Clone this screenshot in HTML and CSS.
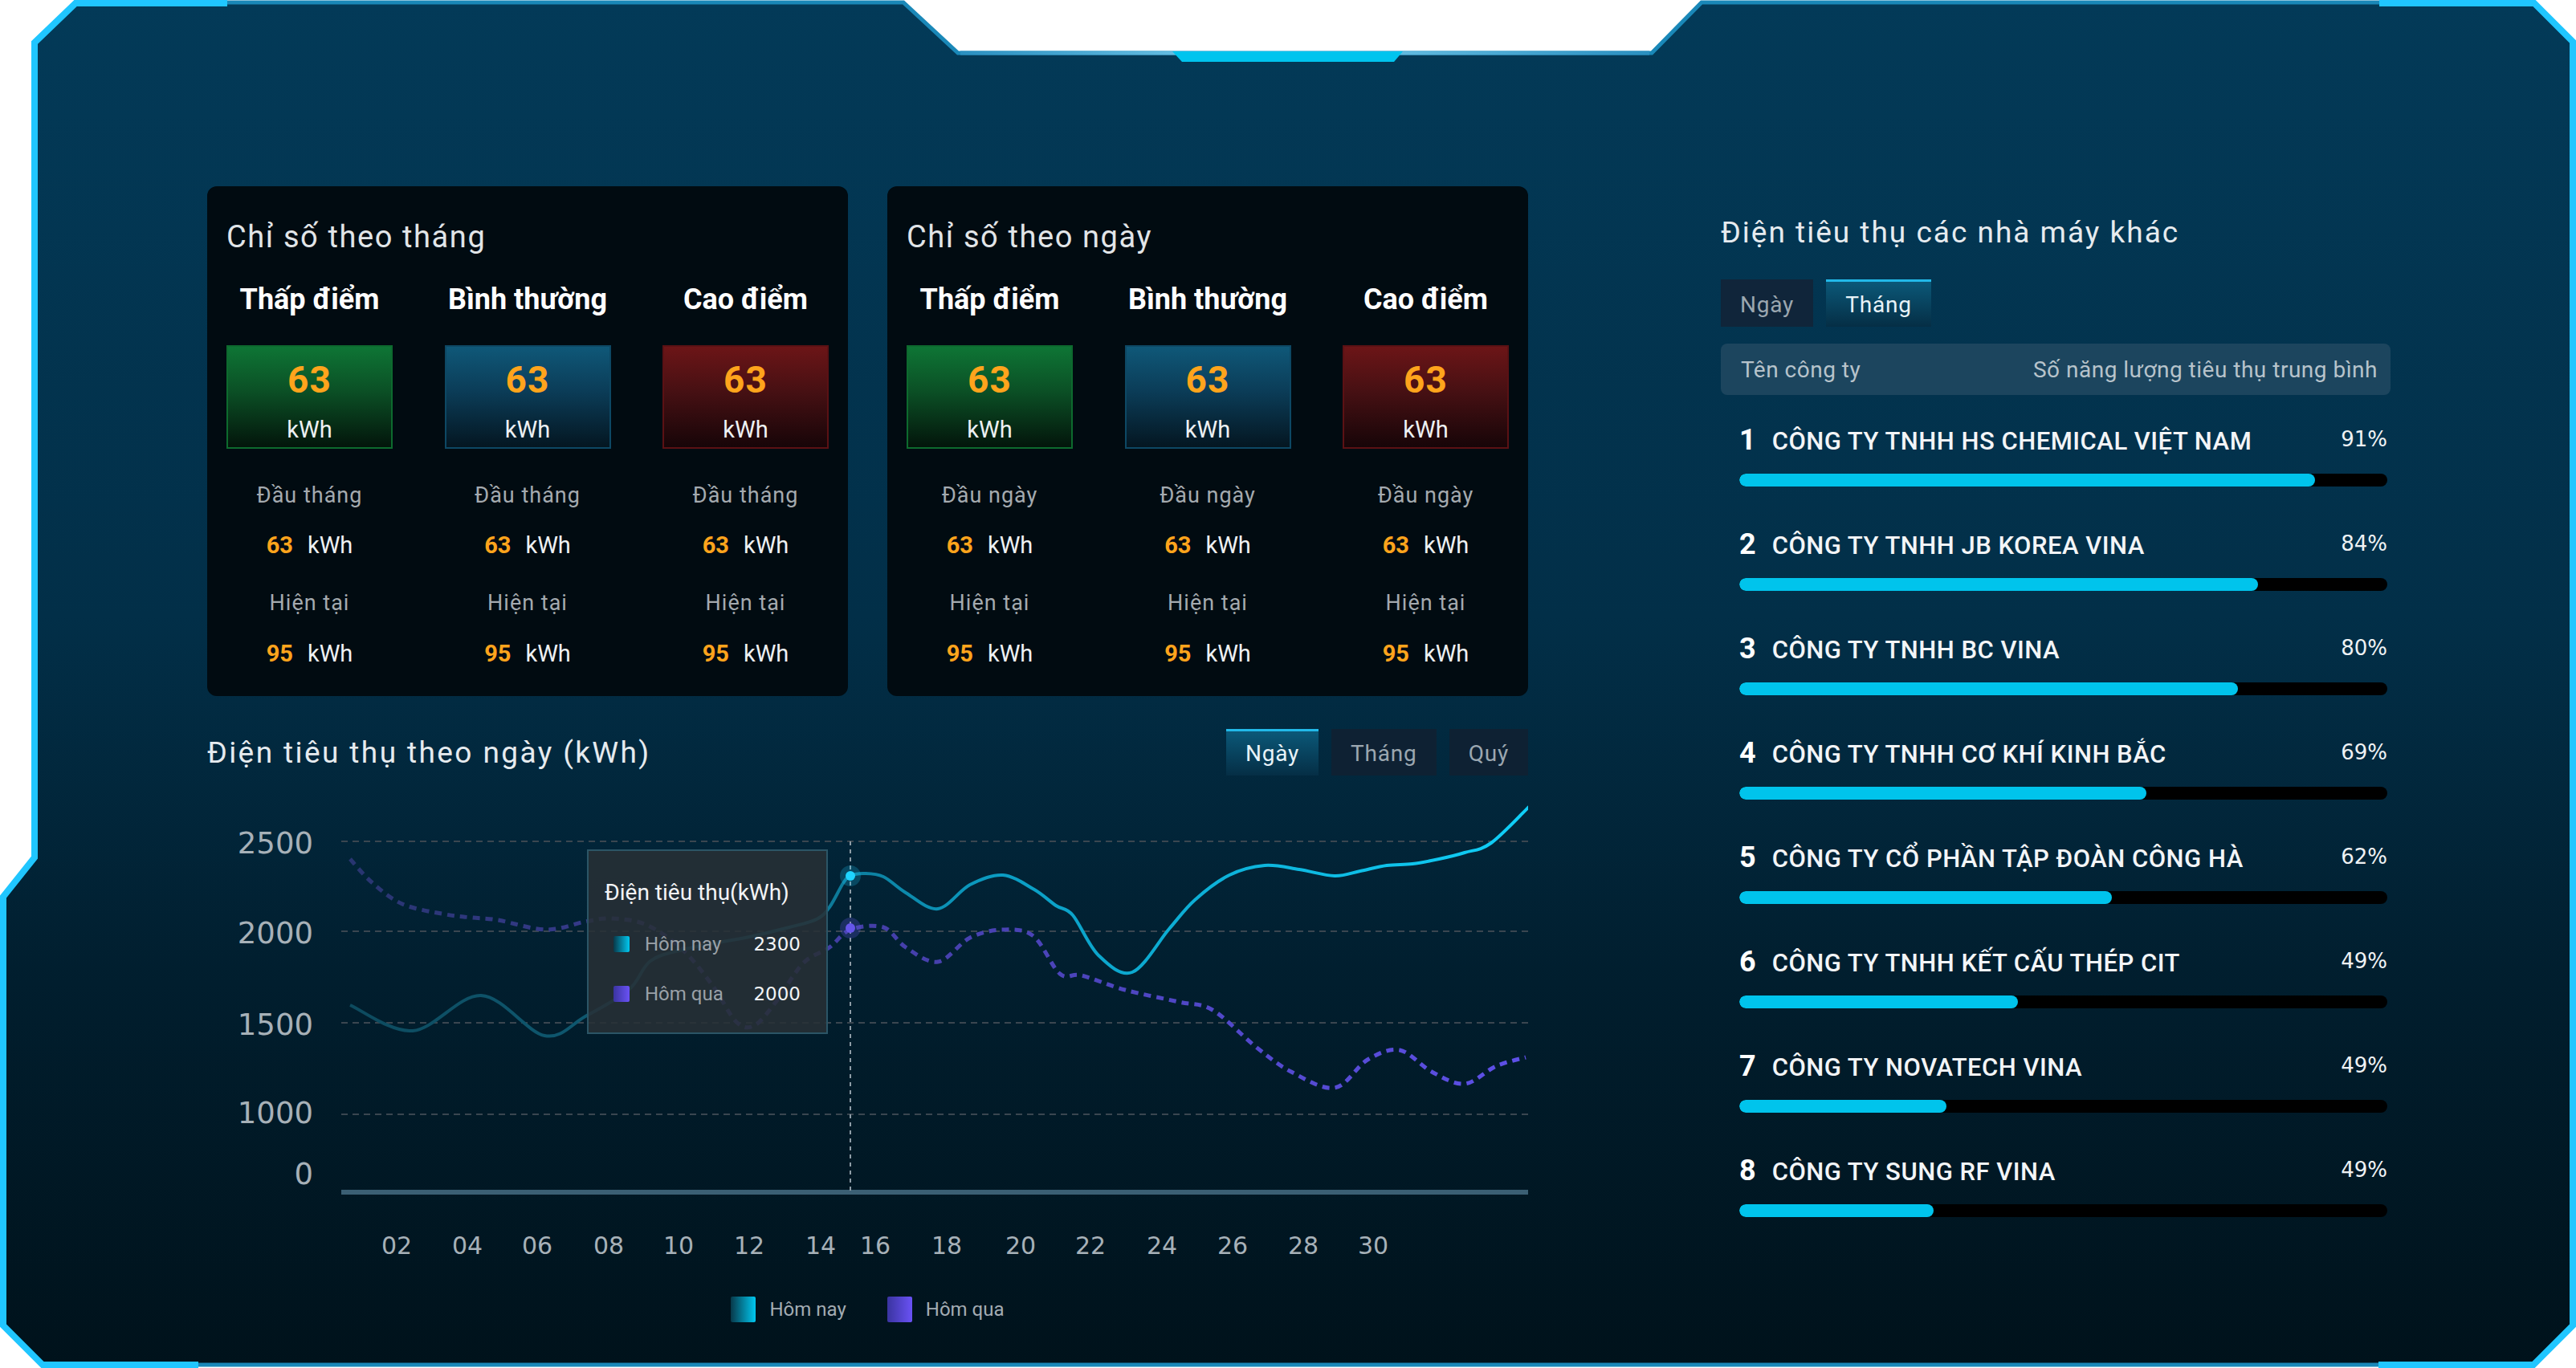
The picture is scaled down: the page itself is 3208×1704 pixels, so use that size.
FILE: index.html
```html
<!DOCTYPE html>
<html lang="vi">
<head>
  <meta charset="UTF-8">
  <meta name="viewport" content="width=device-width, initial-scale=1.0">
  <title>Điện tiêu thụ</title>
  <link rel="stylesheet" href="styles.css">
</head>
<body>
  <div class="screen">
    <svg class="frame" width="3208" height="1704" viewBox="0 0 3208 1704">
      <defs>
        <linearGradient id="frameBg" x1="0" y1="0" x2="0" y2="1">
          <stop offset="0" stop-color="#033a58"/>
          <stop offset="0.45" stop-color="#022f48"/>
          <stop offset="0.72" stop-color="#011e2e"/>
          <stop offset="1" stop-color="#00121b"/>
        </linearGradient>
        <linearGradient id="notchLine" x1="1193" y1="0" x2="2057" y2="0" gradientUnits="userSpaceOnUse">
          <stop offset="0" stop-color="#2a8fc0"/>
          <stop offset="0.45" stop-color="#7dd0f0"/>
          <stop offset="1" stop-color="#2a8fc0"/>
        </linearGradient>
      </defs>
      <path d="M43,1068 L43,52 L94,3 L1125,3 L1193,66 L2057,66 L2119,3 L3156,3 L3204,52 L3204,1651 L3155,1700 L53,1700 L4,1651 L4,1119 Z" fill="url(#frameBg)" stroke="#1a88b8" stroke-width="5"/>
      <path d="M1196,66 L2054,66" stroke="url(#notchLine)" stroke-width="5"/>
      <path d="M283,4 L94,4 L43,53 L43,1068 L4,1117 L4,1651 L53,1700 L247,1700" fill="none" stroke="#20c6ff" stroke-width="8"/>
      <path d="M2963,4 L3156,4 L3204,52 L3204,1651 L3155,1700 L2962,1700" fill="none" stroke="#20c6ff" stroke-width="8"/>
      <polygon points="1460,64 1747,64 1736,77 1472,77" fill="#00c4ee"/>
    </svg>

    <div class="dashboard">
      <div class="main-col">
        <div class="cards">
          <section class="card">
            <h2 class="card-title">Chỉ số theo tháng</h2>
            <div class="levels">
              <div class="level">
                <h3>Thấp điểm</h3>
                <div class="meter green"><span class="meter-value">63</span><span class="meter-unit">kWh</span></div>
                <p class="label">Đầu tháng</p>
                <p class="reading"><b>63</b><span>kWh</span></p>
                <p class="label">Hiện tại</p>
                <p class="reading"><b>95</b><span>kWh</span></p>
              </div>
              <div class="level">
                <h3>Bình thường</h3>
                <div class="meter blue"><span class="meter-value">63</span><span class="meter-unit">kWh</span></div>
                <p class="label">Đầu tháng</p>
                <p class="reading"><b>63</b><span>kWh</span></p>
                <p class="label">Hiện tại</p>
                <p class="reading"><b>95</b><span>kWh</span></p>
              </div>
              <div class="level">
                <h3>Cao điểm</h3>
                <div class="meter red"><span class="meter-value">63</span><span class="meter-unit">kWh</span></div>
                <p class="label">Đầu tháng</p>
                <p class="reading"><b>63</b><span>kWh</span></p>
                <p class="label">Hiện tại</p>
                <p class="reading"><b>95</b><span>kWh</span></p>
              </div>
            </div>
          </section>

          <section class="card">
            <h2 class="card-title">Chỉ số theo ngày</h2>
            <div class="levels">
              <div class="level">
                <h3>Thấp điểm</h3>
                <div class="meter green"><span class="meter-value">63</span><span class="meter-unit">kWh</span></div>
                <p class="label">Đầu ngày</p>
                <p class="reading"><b>63</b><span>kWh</span></p>
                <p class="label">Hiện tại</p>
                <p class="reading"><b>95</b><span>kWh</span></p>
              </div>
              <div class="level">
                <h3>Bình thường</h3>
                <div class="meter blue"><span class="meter-value">63</span><span class="meter-unit">kWh</span></div>
                <p class="label">Đầu ngày</p>
                <p class="reading"><b>63</b><span>kWh</span></p>
                <p class="label">Hiện tại</p>
                <p class="reading"><b>95</b><span>kWh</span></p>
              </div>
              <div class="level">
                <h3>Cao điểm</h3>
                <div class="meter red"><span class="meter-value">63</span><span class="meter-unit">kWh</span></div>
                <p class="label">Đầu ngày</p>
                <p class="reading"><b>63</b><span>kWh</span></p>
                <p class="label">Hiện tại</p>
                <p class="reading"><b>95</b><span>kWh</span></p>
              </div>
            </div>
          </section>
        </div>

        <section class="usage">
          <div class="usage-head">
            <h2>Điện tiêu thụ theo ngày (kWh)</h2>
            <div class="tabs">
              <button type="button" class="tab active">Ngày</button>
              <button type="button" class="tab">Tháng</button>
              <button type="button" class="tab">Quý</button>
            </div>
          </div>

          <div class="chart">
            <svg class="chart-svg" width="1645" height="590" viewBox="0 0 1645 590">
              <defs>
                <linearGradient id="todayStroke" x1="170" y1="0" x2="1645" y2="0" gradientUnits="userSpaceOnUse">
                  <stop offset="0" stop-color="#0d4a5e"/>
                  <stop offset="0.3" stop-color="#0f5e77"/>
                  <stop offset="0.55" stop-color="#0b9cc2"/>
                  <stop offset="1" stop-color="#10cff8"/>
                </linearGradient>
                <linearGradient id="yesterdayStroke" x1="170" y1="0" x2="1645" y2="0" gradientUnits="userSpaceOnUse">
                  <stop offset="0" stop-color="#283570"/>
                  <stop offset="0.45" stop-color="#443fa8"/>
                  <stop offset="1" stop-color="#5e50e8"/>
                </linearGradient>
              </defs>

              <g class="grid">
                <line x1="167" y1="58" x2="1645" y2="58"/>
                <line x1="167" y1="170" x2="1645" y2="170"/>
                <line x1="167" y1="284" x2="1645" y2="284"/>
                <line x1="167" y1="398" x2="1645" y2="398"/>
              </g>
              <line class="axis" x1="167" y1="495" x2="1645" y2="495"/>

              <g class="axis-y">
                <text x="132" y="73">2500</text>
                <text x="132" y="185">2000</text>
                <text x="132" y="299">1500</text>
                <text x="132" y="409">1000</text>
                <text x="132" y="485">0</text>
              </g>

              <g class="axis-x">
                <text x="236" y="572">02</text>
                <text x="324" y="572">04</text>
                <text x="411" y="572">06</text>
                <text x="500" y="572">08</text>
                <text x="587" y="572">10</text>
                <text x="675" y="572">12</text>
                <text x="764" y="572">14</text>
                <text x="832" y="572">16</text>
                <text x="921" y="572">18</text>
                <text x="1013" y="572">20</text>
                <text x="1100" y="572">22</text>
                <text x="1189" y="572">24</text>
                <text x="1277" y="572">26</text>
                <text x="1365" y="572">28</text>
                <text x="1452" y="572">30</text>
              </g>

              <line class="crosshair" x1="801" y1="58" x2="801" y2="495"/>
              <path id="lineYesterday" class="line-yesterday" d=""/>
              <path id="lineToday" class="line-today" d=""/>

              <circle cx="801" cy="101" r="13" fill="#1fcfff" opacity="0.22"/>
              <circle cx="801" cy="101" r="6" fill="#1fd3ff"/>
              <circle cx="801" cy="166" r="13" fill="#6a5af0" opacity="0.25"/>
              <circle cx="801" cy="166" r="6" fill="#6656ea"/>
            </svg>

            <div class="tooltip">
              <p class="tooltip-title">Điện tiêu thụ(kWh)</p>
              <div class="tooltip-row"><i class="swatch today"></i><span>Hôm nay</span><b>2300</b></div>
              <div class="tooltip-row"><i class="swatch yesterday"></i><span>Hôm qua</span><b>2000</b></div>
            </div>
          </div>

          <div class="legend">
            <span class="legend-item"><i class="legend-swatch today"></i>Hôm nay</span>
            <span class="legend-item"><i class="legend-swatch yesterday"></i>Hôm qua</span>
          </div>
        </section>
      </div>

      <aside class="factories">
        <h2>Điện tiêu thụ các nhà máy khác</h2>
        <div class="tabs">
          <button type="button" class="tab">Ngày</button>
          <button type="button" class="tab active">Tháng</button>
        </div>
        <div class="table-head">
          <span>Tên công ty</span>
          <span>Số năng lượng tiêu thụ trung bình</span>
        </div>
        <ol class="ranking">
          <li class="rank">
            <div class="rank-line"><span class="rank-no">1</span><span class="rank-name">CÔNG TY TNHH HS CHEMICAL VIỆT NAM</span><span class="rank-pct">91%</span></div>
            <div class="bar"><div class="bar-fill" style="width: 88.9%"></div></div>
          </li>
          <li class="rank">
            <div class="rank-line"><span class="rank-no">2</span><span class="rank-name">CÔNG TY TNHH JB KOREA VINA</span><span class="rank-pct">84%</span></div>
            <div class="bar"><div class="bar-fill" style="width: 80%"></div></div>
          </li>
          <li class="rank">
            <div class="rank-line"><span class="rank-no">3</span><span class="rank-name">CÔNG TY TNHH BC VINA</span><span class="rank-pct">80%</span></div>
            <div class="bar"><div class="bar-fill" style="width: 77%"></div></div>
          </li>
          <li class="rank">
            <div class="rank-line"><span class="rank-no">4</span><span class="rank-name">CÔNG TY TNHH CƠ KHÍ KINH BẮC</span><span class="rank-pct">69%</span></div>
            <div class="bar"><div class="bar-fill" style="width: 62.8%"></div></div>
          </li>
          <li class="rank">
            <div class="rank-line"><span class="rank-no">5</span><span class="rank-name">CÔNG TY CỔ PHẦN TẬP ĐOÀN CÔNG HÀ</span><span class="rank-pct">62%</span></div>
            <div class="bar"><div class="bar-fill" style="width: 57.5%"></div></div>
          </li>
          <li class="rank">
            <div class="rank-line"><span class="rank-no">6</span><span class="rank-name">CÔNG TY TNHH KẾT CẤU THÉP CIT</span><span class="rank-pct">49%</span></div>
            <div class="bar"><div class="bar-fill" style="width: 43%"></div></div>
          </li>
          <li class="rank">
            <div class="rank-line"><span class="rank-no">7</span><span class="rank-name">CÔNG TY NOVATECH VINA</span><span class="rank-pct">49%</span></div>
            <div class="bar"><div class="bar-fill" style="width: 32%"></div></div>
          </li>
          <li class="rank">
            <div class="rank-line"><span class="rank-no">8</span><span class="rank-name">CÔNG TY SUNG RF VINA</span><span class="rank-pct">49%</span></div>
            <div class="bar"><div class="bar-fill" style="width: 30%"></div></div>
          </li>
        </ol>
      </aside>
    </div>
  </div>

  <script>
    // diem du lieu cua 2 duong (toa do trong svg)
    const today = [
      [178, 262], [256, 294], [341, 250], [420, 300], [471, 276], [525, 243], [552, 207],
      [592, 193], [642, 183], [675, 177], [725, 165], [759, 155], [775, 140], [792, 110],
      [801, 101], [818, 98], [842, 102], [870, 122], [910, 142], [950, 112], [991, 100],
      [1030, 118], [1057, 138], [1078, 150], [1110, 200], [1152, 221], [1198, 167],
      [1230, 131], [1273, 100], [1317, 88], [1360, 93], [1404, 101], [1436, 95],
      [1469, 88], [1501, 86], [1534, 80], [1566, 72], [1599, 60], [1648, 13]
    ];
    const yesterday = [
      [178, 80], [205, 109], [243, 136], [297, 149], [330, 153], [362, 156], [422, 168],
      [471, 158], [503, 154], [547, 162], [592, 193], [629, 237], [659, 283], [682, 287],
      [709, 257], [742, 210], [775, 190], [801, 168], [842, 165], [870, 190], [910, 208],
      [950, 178], [991, 168], [1029, 176], [1062, 223], [1089, 225], [1143, 243],
      [1210, 258], [1252, 268], [1306, 314], [1350, 345], [1404, 365], [1445, 330],
      [1485, 318], [1525, 345], [1566, 360], [1605, 338], [1642, 327]
    ];

    function smoothPath(pts) {
      let d = `M${pts[0][0]},${pts[0][1]}`;
      for (let i = 0; i < pts.length - 1; i++) {
        const p0 = pts[i - 1] || pts[i];
        const p1 = pts[i];
        const p2 = pts[i + 1];
        const p3 = pts[i + 2] || p2;
        const c1x = p1[0] + (p2[0] - p0[0]) / 6;
        const c1y = p1[1] + (p2[1] - p0[1]) / 6;
        const c2x = p2[0] - (p3[0] - p1[0]) / 6;
        const c2y = p2[1] - (p3[1] - p1[1]) / 6;
        d += ` C${c1x.toFixed(1)},${c1y.toFixed(1)} ${c2x.toFixed(1)},${c2y.toFixed(1)} ${p2[0]},${p2[1]}`;
      }
      return d;
    }

    document.getElementById('lineToday').setAttribute('d', smoothPath(today));
    document.getElementById('lineYesterday').setAttribute('d', smoothPath(yesterday));
  </script>
</body>
</html>
```

FILE: styles.css
```css
* {
  box-sizing: border-box;
}

body {
  margin: 0;
  background-color: #fff;
  font-family: Roboto, "Liberation Sans", Arial, sans-serif;
  color: #e6ebef;
}

h2, h3, p {
  margin: 0;
}

.screen {
  position: relative;
  width: 3208px;
  height: 1704px;
  overflow: hidden;
}

.frame {
  position: absolute;
  left: 0;
  top: 0;
}

.dashboard {
  position: relative;
  display: grid;
  grid-template-columns: 1645px 834px;
  column-gap: 240px;
  padding: 232px 0 0 258px;
}

/* the 2 index cards */
.cards {
  display: flex;
  gap: 49px;
}

.card {
  width: 798px;
  height: 635px;
  padding: 39px 24px 0;
  background-color: #010b11;
  border-radius: 12px;
}

.card-title {
  font-size: 38px;
  line-height: 48px;
  font-weight: 400;
  letter-spacing: 1.6px;
  color: #e1e5e8;
  margin-bottom: 32px;
}

.levels {
  display: grid;
  grid-template-columns: repeat(3, 207px);
  justify-content: space-between;
}

.level {
  display: flex;
  flex-direction: column;
  align-items: center;
}

.level h3 {
  font-size: 36px;
  line-height: 44px;
  font-weight: 700;
  color: #fff;
  white-space: nowrap;
  margin-bottom: 35px;
}

.meter {
  width: 207px;
  height: 129px;
  padding-top: 19px;
  border: 2px solid;
  display: flex;
  flex-direction: column;
  align-items: center;
}

.meter-value {
  font-size: 46px;
  line-height: 44px;
  font-weight: 700;
  letter-spacing: 1px;
  color: #ffa41c;
}

.meter-unit {
  margin-top: 23px;
  font-size: 29px;
  line-height: 34px;
  color: #eef1f3;
}

.meter.green {
  background: linear-gradient(180deg, #0e7535 0%, #0b4f25 45%, #03150b 100%);
  border-color: #0d6a2e;
}

.meter.blue {
  background: linear-gradient(180deg, #0f5878 0%, #0b3c57 45%, #041621 100%);
  border-color: #0d4864;
}

.meter.red {
  background: linear-gradient(180deg, #6c1517 0%, #461013 45%, #170508 100%);
  border-color: #5b1114;
}

.label {
  margin-top: 41px;
  font-size: 27px;
  line-height: 34px;
  letter-spacing: 1px;
  color: #a4aaaf;
}

.reading {
  display: flex;
  gap: 18px;
  margin-top: 27px;
  font-size: 29px;
  line-height: 36px;
  color: #eef1f3;
}

.reading + .label {
  margin-top: 37px;
}

.label + .reading:last-child {
  margin-top: 28px;
}

.reading b {
  color: #ffa41c;
  font-weight: 700;
}

/* chart */
.usage {
  margin-top: 41px;
}

.usage-head {
  display: flex;
  justify-content: space-between;
  align-items: center;
  height: 58px;
}

.usage-head h2 {
  font-size: 37px;
  font-weight: 400;
  letter-spacing: 2.4px;
  color: #e6ebef;
}

.tabs {
  display: flex;
  gap: 16px;
}

.tab {
  height: 58px;
  padding: 0 24px;
  font-family: inherit;
  font-size: 28px;
  letter-spacing: 0.8px;
  color: #9ba7b0;
  background-color: #0e2133;
  border: none;
  border-top: 3px solid transparent;
  cursor: pointer;
}

.tab.active {
  color: #e8f3f8;
  background: linear-gradient(180deg, #0b5878, #052e45);
  border-top-color: #22b9e9;
}

.chart {
  position: relative;
  height: 590px;
  margin-top: 24px;
}

.chart-svg {
  display: block;
}

.grid line {
  stroke: #3a4650;
  stroke-width: 2;
  stroke-dasharray: 8 6;
}

.axis {
  stroke: #3b5f74;
  stroke-width: 6;
}

.axis-y text {
  font-family: "DejaVu Sans", sans-serif;
  font-size: 37px;
  fill: #a7b1b8;
  text-anchor: end;
}

.axis-x text {
  font-family: "DejaVu Sans", sans-serif;
  font-size: 30px;
  fill: #a7b1b8;
  text-anchor: middle;
}

.crosshair {
  stroke: #8d9ca6;
  stroke-width: 2;
  stroke-dasharray: 5 5;
}

.line-today {
  fill: none;
  stroke: url(#todayStroke);
  stroke-width: 4;
}

.line-yesterday {
  fill: none;
  stroke: url(#yesterdayStroke);
  stroke-width: 5;
  stroke-dasharray: 9 7;
}

.tooltip {
  position: absolute;
  left: 473px;
  top: 68px;
  width: 300px;
  height: 230px;
  padding: 34px 32px 0 20px;
  background-color: rgba(40, 48, 54, 0.86);
  border: 2px solid #2b5566;
}

.tooltip-title {
  font-size: 28px;
  line-height: 36px;
  color: #f2f4f6;
  margin-bottom: 28px;
}

.tooltip-row {
  display: flex;
  align-items: center;
  height: 36px;
  padding-left: 11px;
  margin-bottom: 26px;
  font-size: 24px;
  color: #9aa1a8;
}

.tooltip-row b {
  margin-left: auto;
  font-family: "DejaVu Sans", sans-serif;
  font-size: 23px;
  font-weight: 400;
  color: #f2f4f6;
}

.swatch {
  width: 20px;
  height: 20px;
  margin-right: 19px;
  border-radius: 2px;
}

.swatch.today,
.legend-swatch.today {
  background: linear-gradient(90deg, #08394a, #00c8f0);
}

.swatch.yesterday,
.legend-swatch.yesterday {
  background: linear-gradient(90deg, #3a34a0, #6a52f5);
}

.legend {
  display: flex;
  justify-content: center;
  gap: 51px;
  margin-top: 35px;
}

.legend-item {
  display: flex;
  align-items: center;
  gap: 17px;
  font-size: 24px;
  color: #a3acb3;
}

.legend-swatch {
  width: 31px;
  height: 32px;
  border-radius: 2px;
}

/* right panel */
.factories {
  margin-top: 34px;
}

.factories h2 {
  font-size: 37px;
  line-height: 48px;
  font-weight: 400;
  letter-spacing: 2px;
  color: #e6ebef;
}

.factories .tabs {
  margin-top: 34px;
}

.factories .tab {
  height: 59px;
  padding: 0 24px;
}

.factories .tab:not(.active) {
  background-color: #10253a;
}

.table-head {
  display: flex;
  justify-content: space-between;
  align-items: center;
  height: 64px;
  margin-top: 21px;
  padding: 0 16px 0 25px;
  background-color: #1c455e;
  border-radius: 8px;
  font-size: 28px;
  letter-spacing: 0.5px;
  color: #b7c3cb;
}

.ranking {
  list-style: none;
  margin: 36px 0 0;
  padding: 0 4px 0 23px;
}

.rank {
  margin-bottom: 52px;
}

.rank-line {
  display: flex;
  align-items: baseline;
  height: 42px;
}

.rank-no {
  margin-right: 20px;
  font-size: 36px;
  line-height: 40px;
  font-weight: 700;
  color: #fff;
}

.rank-name {
  flex: 1;
  font-size: 31px;
  line-height: 40px;
  font-weight: 500;
  letter-spacing: 0.5px;
  color: #f3f5f7;
}

.rank-pct {
  align-self: flex-start;
  font-family: "DejaVu Sans", sans-serif;
  font-size: 26px;
  line-height: 38px;
  color: #eff2f4;
}

.bar {
  height: 16px;
  margin-top: 20px;
  background-color: #000;
  border-radius: 8px;
  overflow: hidden;
}

.bar-fill {
  height: 100%;
  background-color: #00c4ec;
  border-radius: 8px;
}
```
